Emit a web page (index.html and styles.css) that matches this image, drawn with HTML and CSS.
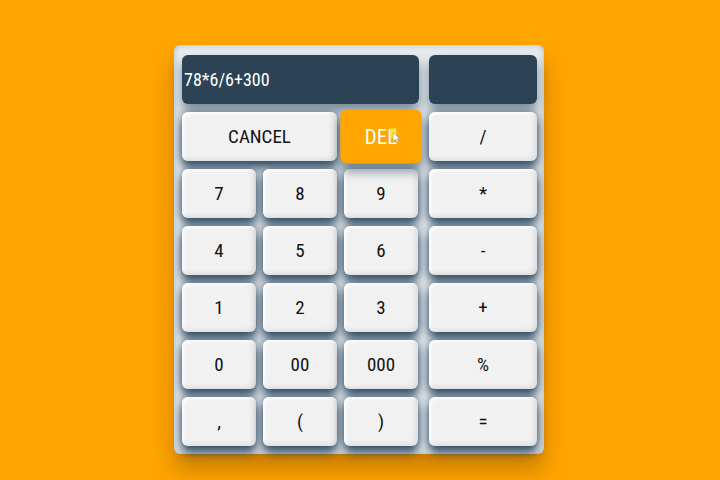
FILE: index.html
```html
<!DOCTYPE html>
<html>
<head>
<meta charset="utf-8">
<link rel="stylesheet" href="styles.css">
</head>
<body>
<div class="stage">
  <div class="calc">
    <div class="display main">78*6/6+300</div>
    <div class="display side"></div>
    <button class="key wide">CANCEL</button>
    <button class="key del">DEL<span class="cursor"><svg width="10" height="14" viewBox="0 0 10 14"><rect x="0" y="0" width="6" height="9" fill="#f7e44a"/><path d="M3 4 L3 12 L5 10 L7 13 L8 12.5 L6.5 9.5 L9 9.5 Z" fill="#fff" stroke="#9aa" stroke-width="0.6"/></svg></span></button>
    <button class="key op">/</button>
    <button class="key">7</button>
    <button class="key">8</button>
    <button class="key">9</button>
    <button class="key op">*</button>
    <button class="key">4</button>
    <button class="key">5</button>
    <button class="key">6</button>
    <button class="key op">-</button>
    <button class="key">1</button>
    <button class="key">2</button>
    <button class="key">3</button>
    <button class="key op">+</button>
    <button class="key">0</button>
    <button class="key">00</button>
    <button class="key">000</button>
    <button class="key op">%</button>
    <button class="key">,</button>
    <button class="key">(</button>
    <button class="key">)</button>
    <button class="key op">=</button>
  </div>
</div>
</body>
</html>
```
FILE: styles.css
```css
html, body {
  margin: 0;
  padding: 0;
  background: #ffa500;
  width: 720px;
  height: 480px;
  overflow: hidden;
}
.stage {
  display: flex;
  justify-content: flex-start;
  padding: 45px 0 0 174px;
}
.calc {
  width: 354px;
  padding: 10px 8px 8px 8px;
  background: #e9edf0;
  border-radius: 6px;
  box-shadow: 0 16px 22px rgba(140, 80, 0, 0.45), inset 0 0 6px rgba(60, 90, 110, 0.35);
  display: grid;
  grid-template-columns: 74px 74px 74px 112px;
  grid-auto-rows: 49px;
  column-gap: 7px;
  row-gap: 8px;
  font-family: "Liberation Sans Narrow", "Roboto Condensed", "Roboto", sans-serif;
}
.display {
  background: #2c4356;
  border-radius: 6px;
  color: #fff;
  font-size: 18px;
  display: flex;
  align-items: center;
  padding-left: 2px;
  box-shadow: 0 7px 12px rgba(40, 70, 95, 0.6);
}
.display.main {
  grid-column: 1 / span 3;
  margin-right: -1px;
}
.display.side {
  justify-self: end;
  width: 108px;
  padding: 0;
}
.key {
  border: none;
  margin: 0;
  padding: 0;
  font-family: inherit;
  font-size: 19px;
  color: #111;
  background: #f1f1f1;
  border-radius: 6px;
  box-shadow: 0 7px 10px rgba(35, 65, 90, 0.85), 0 0 8px rgba(35, 65, 90, 0.6), inset -3px -2px 5px rgba(0, 0, 0, 0.08), inset 2px 2px 3px rgba(255, 255, 255, 0.9);
  position: relative;
}
.key.wide {
  grid-column: 1 / span 2;
}
.key.op {
  justify-self: end;
  width: 108px;
}
.key.del {
  background: #ffa500;
  color: #fff;
  transform: scale(1.1);
  box-shadow: 0 6px 10px rgba(35, 65, 90, 0.6);
  z-index: 1;
}
.cursor {
  position: absolute;
  left: 45px;
  top: 17px;
  line-height: 0;
}
```
